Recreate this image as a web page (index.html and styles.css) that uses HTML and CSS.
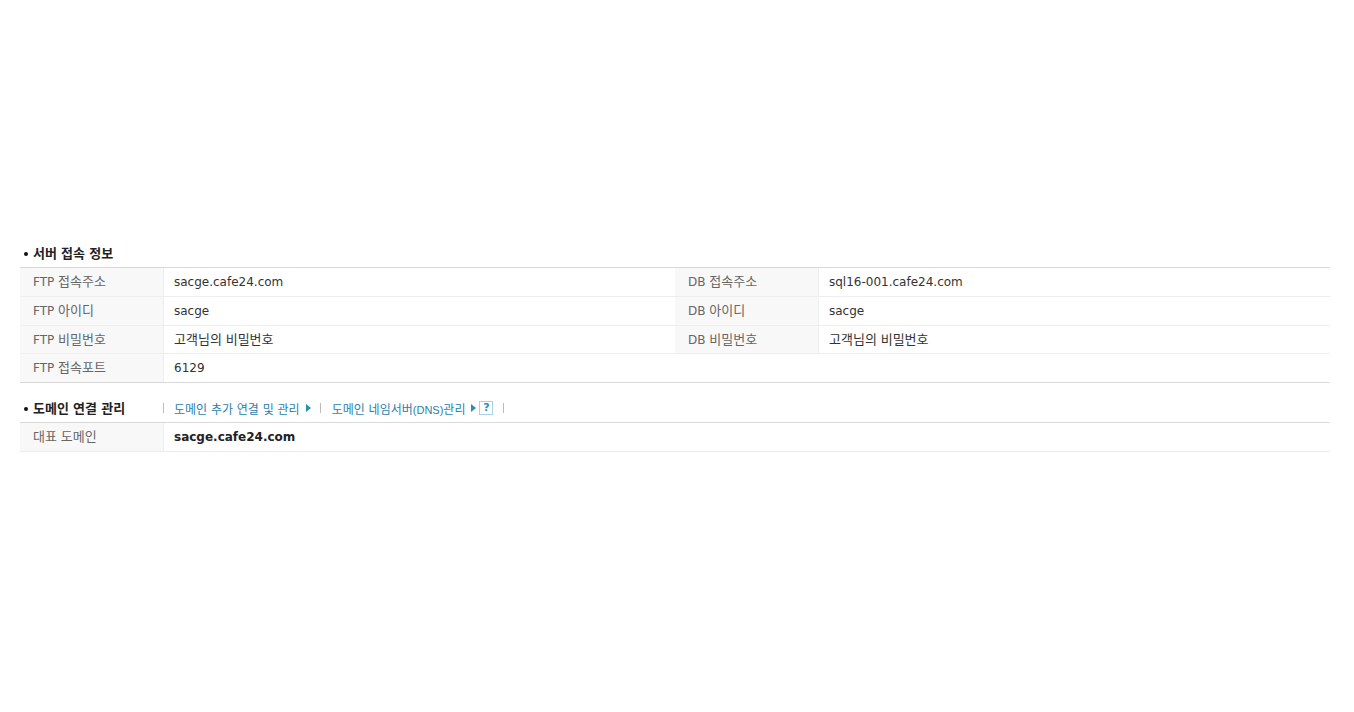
FILE: index.html
```html
<!DOCTYPE html>
<html lang="ko">
<head>
<meta charset="utf-8">
<title>서버 접속 정보</title>
<link rel="stylesheet" href="styles.css">
</head>
<body>
<main class="page">
  <h2 class="title title-first"><span class="dot"></span><span><span class="ko">서버</span> <span class="ko">접속</span> <span class="ko">정보</span></span></h2>
  <div class="table">
    <div class="row"><div class="th">FTP <span class="ko">접속주소</span></div><div class="td">sacge.cafe24.com</div><div class="th">DB <span class="ko">접속주소</span></div><div class="td">sql16-001.cafe24.com</div></div>
    <div class="row"><div class="th">FTP <span class="ko">아이디</span></div><div class="td">sacge</div><div class="th">DB <span class="ko">아이디</span></div><div class="td">sacge</div></div>
    <div class="row row-short"><div class="th">FTP <span class="ko">비밀번호</span></div><div class="td"><span class="ko">고객님의</span> <span class="ko">비밀번호</span></div><div class="th">DB <span class="ko">비밀번호</span></div><div class="td"><span class="ko">고객님의</span> <span class="ko">비밀번호</span></div></div>
    <div class="row row-last"><div class="th">FTP <span class="ko">접속포트</span></div><div class="td">6129</div></div>
  </div>
  <div class="title-bar">
    <h2 class="title title-inline"><span class="dot"></span><span><span class="ko">도메인</span> <span class="ko">연결</span> <span class="ko">관리</span></span></h2>
    <nav class="links">
      <span class="sep"></span>
      <a class="link">도메인 추가 연결 및 관리<span class="arrow"></span></a>
      <span class="sep"></span>
      <a class="link link-dns"><span>도메인 네임서버<span class="latin-small">(DNS)</span>관리</span><span class="arrow arrow-tight"></span></a>
      <span class="help">?</span>
      <span class="sep sep-end"></span>
    </nav>
  </div>
  <div class="table table-light">
    <div class="row row-last"><div class="th"><span class="ko">대표</span> <span class="ko">도메인</span></div><div class="td td-strong">sacge.cafe24.com</div></div>
  </div>
</main>
</body>
</html>
```
FILE: styles.css
```css
* { box-sizing: border-box; }
html, body { margin: 0; padding: 0; background: #fff; }
body {
  font-family: "DejaVu Sans", "Noto Sans CJK KR", sans-serif;
  font-size: 12px;
  color: #333;
}
.page { padding: 245px 24px 0 20px; }
.ko { font-size: 13px; }
.title {
  display: flex;
  align-items: center;
  margin: 0;
  font-size: 12px;
  font-weight: bold;
  color: #222;
  line-height: 16px;
}
.title-first { height: 22px; padding-bottom: 4px; }
.dot {
  width: 4px;
  height: 4px;
  margin: 0 5px 0 4px;
  border-radius: 50%;
  background: #111;
}
.table { border-top: 1px solid #d9d9d9; border-bottom: 1px solid #d9d9d9; }
.table-light { border-bottom-color: #ececec; }
.row {
  display: grid;
  grid-template-columns: 144px 511px 144px 1fr;
  grid-template-rows: minmax(0, 1fr);
  height: 29px;
  border-bottom: 1px solid #eee;
  line-height: 28px;
}
.row-short { height: 28px; line-height: 27px; }
.row-last { height: 28px; border-bottom: 0; }
.th {
  padding-left: 13px;
  background: #f8f8f8;
  border-right: 1px solid #eee;
  color: #666;
}
.td { padding-left: 10px; color: #333; }
.td-strong { font-weight: bold; color: #222; }
.title-bar { display: flex; align-items: center; height: 39px; padding-top: 11px; }
.title-inline { width: 143px; padding-top: 2px; }
.links { display: flex; align-items: center; color: #2a7fae; }
.sep { width: 1px; height: 10px; background: #bbb; }
.link { display: flex; align-items: center; margin-left: 10px; }
.link-dns { margin-left: 11px; }
.latin-small { font-family: "Liberation Sans", sans-serif; font-size: 11px; }
.arrow {
  width: 0;
  height: 0;
  margin: 0 9px 0 6px;
  border-left: 5px solid #2a8fb0;
  border-top: 4px solid transparent;
  border-bottom: 4px solid transparent;
}
.arrow-tight { margin-right: 3px; }
.help {
  width: 14px;
  height: 14px;
  border: 1px solid #a9d3ec;
  color: #2a8fb0;
  font-size: 11px;
  font-weight: bold;
  line-height: 12px;
  text-align: center;
}
.sep-end { margin-left: 10px; }
```
